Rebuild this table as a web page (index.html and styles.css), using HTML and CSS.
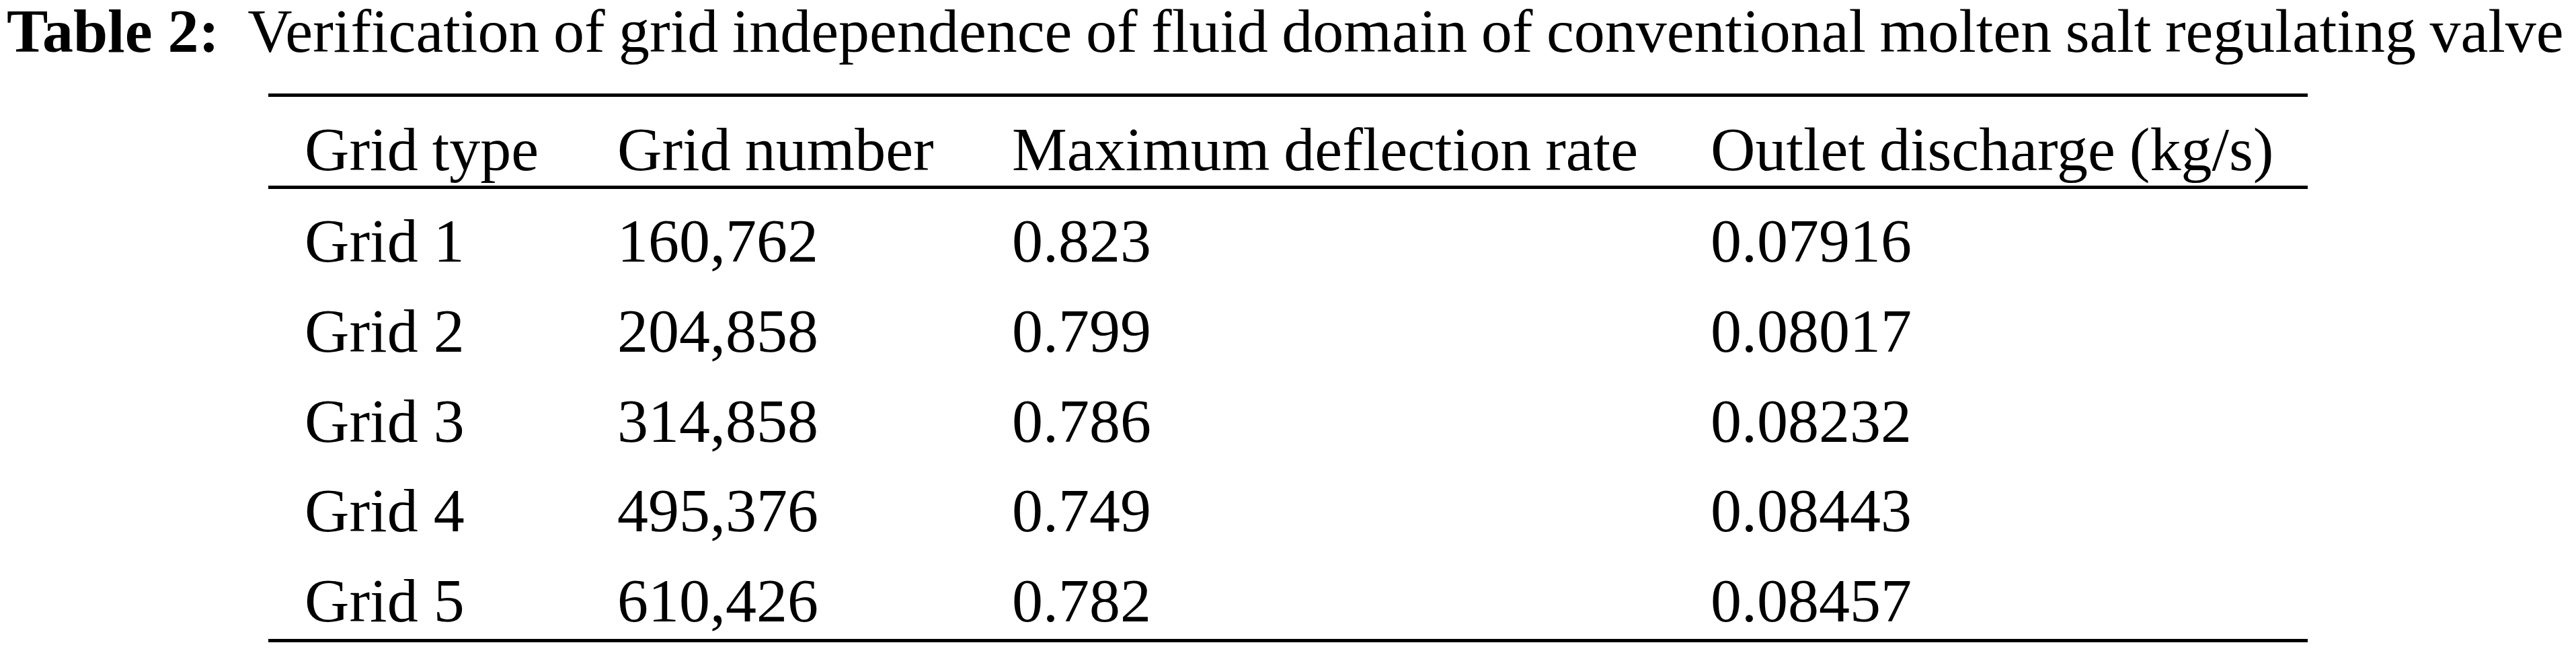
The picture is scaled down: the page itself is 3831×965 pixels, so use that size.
FILE: index.html
```html
<!DOCTYPE html>
<html lang="en">
<head>
    <meta charset="UTF-8">
    <meta name="viewport" content="width=device-width, initial-scale=1.0">
    <title>Table 2</title>

    <link rel="stylesheet" href="styles.css">
</head>
<body>

    <div class="caption"><strong class="caption-label">Table 2:</strong>Verification of grid independence of fluid domain of conventional molten salt regulating valve</div>

    <table class="data-table">
        <colgroup>
            <col class="col-type">
            <col class="col-number">
            <col class="col-rate">
            <col class="col-discharge">
        </colgroup>
        <thead>
            <tr>
                <th>Grid type</th>
                <th>Grid number</th>
                <th>Maximum deflection rate</th>
                <th>Outlet discharge (kg/s)</th>
            </tr>
        </thead>
        <tbody>
            <tr>
                <td>Grid 1</td>
                <td>160,762</td>
                <td>0.823</td>
                <td>0.07916</td>
            </tr>
            <tr>
                <td>Grid 2</td>
                <td>204,858</td>
                <td>0.799</td>
                <td>0.08017</td>
            </tr>
            <tr>
                <td>Grid 3</td>
                <td>314,858</td>
                <td>0.786</td>
                <td>0.08232</td>
            </tr>
            <tr>
                <td>Grid 4</td>
                <td>495,376</td>
                <td>0.749</td>
                <td>0.08443</td>
            </tr>
            <tr>
                <td>Grid 5</td>
                <td>610,426</td>
                <td>0.782</td>
                <td>0.08457</td>
            </tr>
        </tbody>
    </table>

</body>
</html>
```

FILE: styles.css
```css
*, *::before, *::after {
    box-sizing: border-box;
}

body {
    font-family: 'Liberation Serif', 'Times New Roman', Times, serif;
    font-size: 92px;
    color: black;
    background-color: white;
    margin: 0;
    padding: 0;
}

.caption {
    line-height: 92px;
    padding-left: 10px;
    word-spacing: -2.5px;
    white-space: nowrap;
}

.caption-label {
    font-weight: bold;
    word-spacing: 0;
    margin-right: 42px;
}

.data-table {
    width: 3033px;
    margin: 47px 0 0 399px;
    border-collapse: separate;
    border-spacing: 0;
    table-layout: fixed;
}

.col-type {
    width: 465px;
}

.col-number {
    width: 587px;
}

.col-rate {
    width: 1039px;
}

.col-discharge {
    width: 942px;
}

th, td {
    text-align: left;
    font-weight: normal;
    line-height: 92px;
    padding-left: 54px;
    white-space: nowrap;
}

th {
    border-top: 5px solid black;
    border-bottom: 5px solid black;
    padding-top: 32px;
    padding-bottom: 8px;
    word-spacing: -2px;
}

td {
    padding-top: 31px;
    padding-bottom: 10.75px;
}

tbody tr:last-child td {
    border-bottom: 5px solid black;
}
```
